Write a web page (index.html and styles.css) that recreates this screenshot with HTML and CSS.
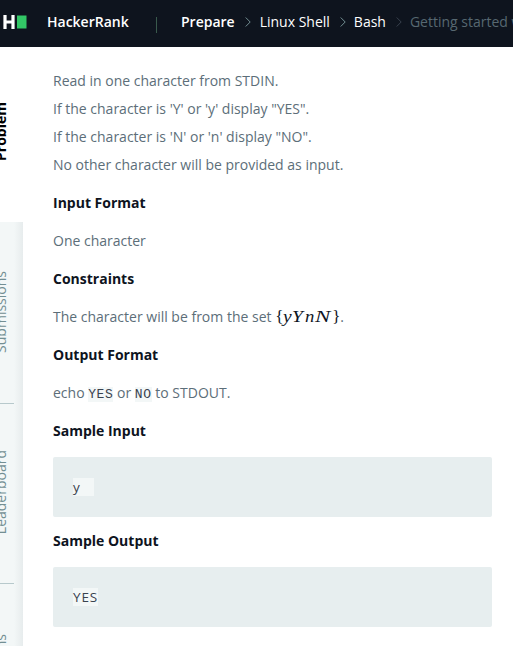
FILE: index.html
```html
<!DOCTYPE html>
<html lang="en">
<head>
<meta charset="utf-8">
<title>HackerRank</title>
<link rel="stylesheet" href="styles.css">
</head>
<body>
<header class="topbar">
  <svg class="logo" width="25" height="14" viewBox="0 0 25 14"><path d="M2 0V14M10 0V14M2 7H10" stroke="#fff" stroke-width="3.2" fill="none"/><path d="M14 0.5H23.5V13.5H14Z" fill="#32c766"/></svg>
  <span class="brand">HackerRank</span>
  <span class="divider"></span>
  <nav class="crumbs">
    <span class="strong">Prepare</span>
    <svg class="chev" width="6" height="10" viewBox="0 0 6 10"><path d="M.7.5 5.2 5 .7 9.5"/></svg>
    <span>Linux Shell</span>
    <svg class="chev" width="6" height="10" viewBox="0 0 6 10"><path d="M.7.5 5.2 5 .7 9.5"/></svg>
    <span class="bash">Bash</span>
    <svg class="chev faint" width="6" height="10" viewBox="0 0 6 10"><path d="M.7.5 5.2 5 .7 9.5"/></svg>
    <span class="current">Getting started with conditionals</span>
  </nav>
</header>
<div class="page">
  <aside class="tabs">
    <div class="tab active"><span>Problem</span></div>
    <div class="tab"><span>Submissions</span></div>
    <div class="tab"><span>Leaderboard</span></div>
    <div class="tab"><span>Discussions</span></div>
  </aside>
  <main class="content">
    <p>Read in one character from STDIN.<br>If the character is 'Y' or 'y' display "YES".<br>If the character is 'N' or 'n' display "NO".<br>No other character will be provided as input.</p>
    <h2>Input Format</h2>
    <p>One character</p>
    <h2>Constraints</h2>
    <p>The character will be from the set <span class="math"><b>{</b><i class="y">y</i><i class="cap">Y</i><i class="n">n</i><i class="last">N</i><b>}</b></span>.</p>
    <h2>Output Format</h2>
    <p>echo <code>YES</code> or <code>NO</code> to STDOUT.</p>
    <h2>Sample Input</h2>
    <pre><span class="sample short">y</span></pre>
    <h2>Sample Output</h2>
    <pre><span class="sample">YES</span></pre>
  </main>
</div>
</body>
</html>
```
FILE: styles.css
```css
* { box-sizing: border-box; }
body {
  margin: 0;
  height: 646px;
  overflow: hidden;
  background: #fff;
  font: 14px/28px "Open Sans", sans-serif;
  color: #576871;
}
.topbar {
  height: 47px;
  display: flex;
  align-items: center;
  padding: 0 0 3px 3px;
  background: #0e141e;
  color: #fff;
  white-space: nowrap;
  overflow: hidden;
}
.topbar > *, .crumbs > * { flex: none; }
.logo { margin-right: 19px; }
.brand, .strong { font-weight: 600; }
.brand { width: 109px; }
.divider { width: 1px; height: 16px; margin: 6px 24px 0 0; background: #39594c; }
.crumbs { display: flex; align-items: center; }
.chev { margin: 0 9px 0 10px; fill: none; stroke: #738f93; stroke-width: 1; }
.bash { margin-left: -1px; }
.faint { stroke: #39424e; margin-right: 8px; }
.current { color: #576871; }
.page { display: flex; height: 599px; }
.tabs { width: 23px; flex: none; overflow: hidden; }
.tab {
  height: 180px;
  display: flex;
  align-items: center;
  justify-content: center;
  padding: 0 22px 3px 0;
  color: #738f93;
  background:
    linear-gradient(#b7c9cc, #b7c9cc) 0 100% / 14px 1px no-repeat,
    linear-gradient(90deg, #f3f7f7 14px, #e7eced 23px);
}
.tab span { writing-mode: vertical-rl; transform: rotate(180deg); line-height: 20px; flex: none; }
.tab.active { height: 175px; padding-bottom: 7px; background: #fff; color: #000; font-weight: 700; }
.tab:nth-child(2) { height: 182px; }
.content { width: 439px; margin-left: 30px; padding-top: 20px; }
p { margin: 0 0 10px; height: 28px; white-space: nowrap; color: #5c6e79; }
p:first-child { height: 112px; }
h2 { margin: 0 0 10px; height: 28px; font-size: 14px; line-height: 28px; font-weight: 700; color: #0e141e; }
code { font: 13px/18px "Liberation Mono", monospace; letter-spacing: .6px; background: #f3f7f7; color: #39424e; }
pre {
  margin: 12px 0 10px;
  height: 60px;
  padding: 21px 20px;
  border-radius: 2px;
  background: #e7eeef;
  line-height: 18px;
}
.sample {
  display: block;
  width: 25px;
  height: 18px;
  background: #f3f7f7;
  color: #39424e;
  font: 13.5px/18px "Open Sans", sans-serif;
  letter-spacing: .9px;
}
.short { width: 21px; }
.math { display: inline-flex; width: 65px; height: 20px; align-items: baseline; color: #0e141e; font: 17px/20px "Liberation Serif", serif; }
.math b { font-weight: 400; width: 8px; }
.math i { display: block; flex: none; font-size: 17px; transform-origin: 0 50%; }
.y { width: 9px; transform: scaleX(1.15); }
.cap { width: 13px; transform: scaleX(1.15); }
.n { width: 10px; transform: scaleX(1.1); }
.last { width: 17px; transform: scaleX(1.35); }
```
